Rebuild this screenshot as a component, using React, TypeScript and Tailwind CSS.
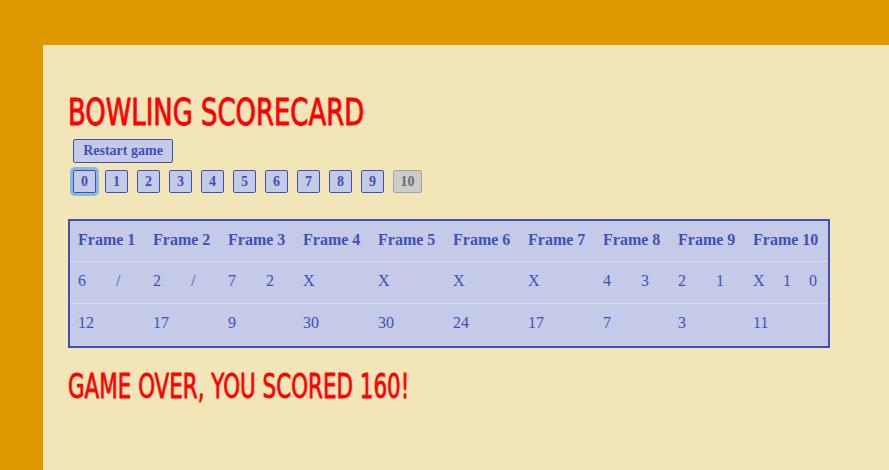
import React from "react";

const frames: { rolls: string[]; score: string }[] = [
  { rolls: ["6", "/"], score: "12" },
  { rolls: ["2", "/"], score: "17" },
  { rolls: ["7", "2"], score: "9" },
  { rolls: ["X"], score: "30" },
  { rolls: ["X"], score: "30" },
  { rolls: ["X"], score: "24" },
  { rolls: ["X"], score: "17" },
  { rolls: ["4", "3"], score: "7" },
  { rolls: ["2", "1"], score: "3" },
  { rolls: ["X", "1", "0"], score: "11" },
];

const serif = "font-['Liberation_Serif',serif]";

export default function App() {
  return (
    <div className="min-h-screen bg-[#de9800] pl-[43px] pt-[45px] flex">
      <div className={`flex-1 bg-[#f2e6b8] pl-[25px] pt-[45px] ${serif}`}>
        <h1 className="font-['DejaVu_Sans_Condensed',sans-serif] text-[38px] leading-[44px] text-[#ff0000] [-webkit-text-stroke:0.9px_#ff0000] origin-left scale-x-[0.758] whitespace-nowrap">
          BOWLING SCORECARD
        </h1>
        <div className="mt-[5px] pl-[5px] flex flex-col gap-[7px]">
          <button className="w-[100px] h-[24px] border border-[#3f51b5] rounded-[2px] bg-[#c5cae9] text-[#3f51b5] text-[14px] font-bold leading-none">
            Restart game
          </button>
          <div className="flex gap-[9px]">
            {["0", "1", "2", "3", "4", "5", "6", "7", "8", "9"].map((n) => (
              <button
                key={n}
                className={`w-[23px] h-[23px] border border-[#3f51b5] rounded-[2px] bg-[#c5cae9] text-[#3f51b5] text-[14px] font-bold leading-none ${
                  n === "0" ? "shadow-[0_0_0_3px_#86b9e6]" : ""
                }`}
              >
                {n}
              </button>
            ))}
            <button className="w-[29px] h-[23px] border border-[#a3a3a3] rounded-[2px] bg-[#cccccc] text-[#6b6b6b] text-[14px] font-bold leading-none">
              10
            </button>
          </div>
        </div>
        <div className="mt-[26px] w-[762px] border-2 border-[#3f51b5] bg-[#c5cae9] text-[#3f51b5] text-[16px]">
          <div className="flex h-[41px] items-center pb-[3px] border-b border-[#dadbe6] font-bold">
            {frames.map((_, i) => (
              <div key={i} className="w-[75px] pl-[8px] whitespace-nowrap">
                Frame {i + 1}
              </div>
            ))}
          </div>
          <div className="flex h-[42px] items-center pb-[4px] border-b border-[#dadbe6]">
            {frames.map((f, i) => (
              <div key={i} className="w-[75px] pl-[8px] flex">
                {i === 9 ? (
                  <>
                    <span className="w-[30px]">{f.rolls[0]}</span>
                    <span className="w-[26px]">{f.rolls[1]}</span>
                    <span>{f.rolls[2]}</span>
                  </>
                ) : (
                  <>
                    <span className="w-[38px]">{f.rolls[0]}</span>
                    {f.rolls[1] && <span>{f.rolls[1]}</span>}
                  </>
                )}
              </div>
            ))}
          </div>
          <div className="flex h-[42px] items-center pb-[4px]">
            {frames.map((f, i) => (
              <div key={i} className="w-[75px] pl-[8px]">
                {f.score}
              </div>
            ))}
          </div>
        </div>
        <h2 className="mt-[19px] font-['DejaVu_Sans_Condensed',sans-serif] text-[33.6px] leading-[40px] text-[#ff0000] [-webkit-text-stroke:0.8px_#ff0000] origin-left scale-x-[0.71] whitespace-nowrap">
          GAME OVER, YOU SCORED 160!
        </h2>
      </div>
    </div>
  );
}
